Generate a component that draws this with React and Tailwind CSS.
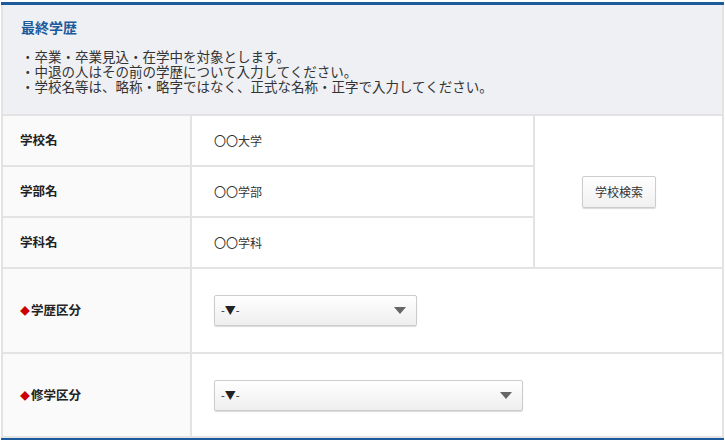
export default function App() {
  const font = { fontFamily: '"Noto Sans CJK JP", "Noto Sans", sans-serif' };
  const Label = ({ children, diamond, h }) => (
    <div className={`w-[189px] ${h} bg-[#fafafa] flex items-center pl-[17px] text-[12.5px] font-bold text-[#222] border-b-2 border-r-2 border-[#e3e3e3] shrink-0`}>
      {diamond && <span className="text-[#c00] text-[10px] mr-[1px]">◆</span>}
      {children}
    </div>
  );
  const Val = ({ children }) => (
    <div className="h-[51px] flex items-center pl-[22px] text-[12px] text-[#333] border-b-2 border-[#e3e3e3]">{children}</div>
  );
  const Select = ({ w }) => (
    <div className={`${w} h-[31px] border border-[#ccc] rounded-[2px] shadow-[0_1px_1px_rgba(0,0,0,0.15)] bg-gradient-to-b from-white to-[#eee] flex items-center justify-between pl-[6px] pr-[10px] text-[11px] text-[#222]`}>
      <span>-▼-</span>
      <svg width="12" height="7" viewBox="0 0 12 7"><path d="M0 0h12L6 7z" fill="#666" /></svg>
    </div>
  );
  return (
    <div style={font} className="w-[725px] h-[441px] bg-white pt-[2px] overflow-hidden">
      <div className="border-t-[3px] border-[#1d5a9c] mx-[1px]">
        <div className="bg-[#eef0f3] h-[109px] pl-[18px] pt-[12px] border-x-2 border-[#e3e3e3]">
          <div className="text-[#1d5a9c] font-bold text-[14px] leading-[20px]">最終学歴</div>
          <div className="mt-[12px] text-[13.5px] text-[#333]">
            <div className="h-[15px] leading-[15px]">・卒業・卒業見込・在学中を対象とします。</div>
            <div className="h-[15px] leading-[15px]">・中退の人はその前の学歴について入力してください。</div>
            <div className="h-[15px] leading-[15px]">・学校名等は、略称・略字ではなく、正式な名称・正字で入力してください。</div>
          </div>
        </div>
        <div className="border-x-2 border-t-2 border-[#e3e3e3]">
          <div className="flex">
            <div className="flex flex-col">
              <Label h="h-[51px]">学校名</Label>
              <Label h="h-[51px]">学部名</Label>
              <Label h="h-[51px]">学科名</Label>
            </div>
            <div className="w-[343px] flex flex-col border-r-2 border-[#e3e3e3]">
              <Val>〇〇大学</Val>
              <Val>〇〇学部</Val>
              <Val>〇〇学科</Val>
            </div>
            <div className="flex-1 flex items-center pl-[47px] border-b-2 border-[#e3e3e3]">
              <button className="w-[74px] h-[32px] border border-[#ccc] rounded-[2px] bg-gradient-to-b from-white to-[#f0f0f0] shadow-[0_1px_1px_rgba(0,0,0,0.15)] text-[12px] text-[#333]">学校検索</button>
            </div>
          </div>
          <div className="flex">
            <Label h="h-[85px]" diamond>学歴区分</Label>
            <div className="flex-1 flex items-center pl-[22px] border-b-2 border-[#e3e3e3]"><Select w="w-[203px]" /></div>
          </div>
          <div className="flex">
            <Label h="h-[84px]" diamond>修学区分</Label>
            <div className="flex-1 flex items-center pl-[22px] border-b-2 border-[#e3e3e3]"><Select w="w-[309px]" /></div>
          </div>
        </div>
        <div className="border-t-[2px] border-[#1d5a9c]" />
      </div>
    </div>
  );
}
